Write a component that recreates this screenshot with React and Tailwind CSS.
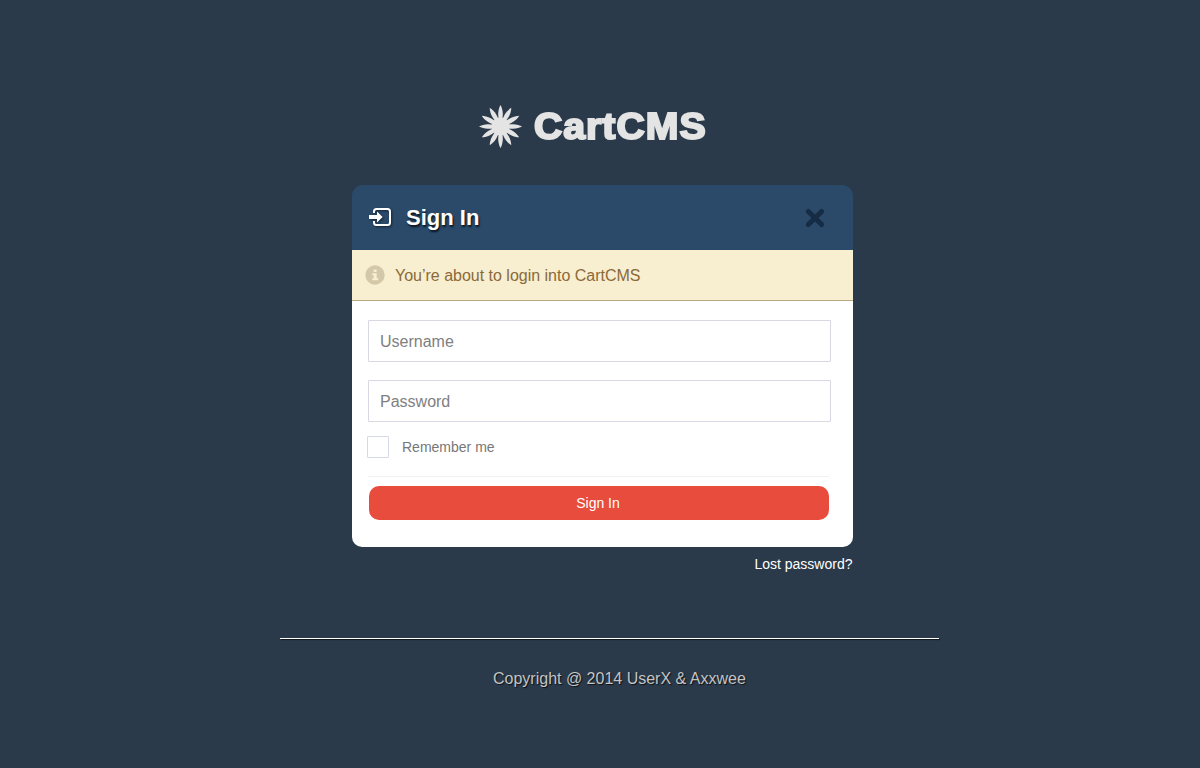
import React from "react";

const petals = [0, 30, 60, 90, 120, 150, 180, 210, 240, 270, 300, 330];

function FlowerLogo() {
  return (
    <svg className="h-[44px] w-[44px] shrink-0" viewBox="-21.5 -22.5 44 44" fill="#e4e4e4">
      <circle r="9" />
      {petals.map((a) => (
        <path key={a} transform={`rotate(${a})`} d="M0 -21.6C1.2 -19.5 2.3 -16 2.3 -12.5C2.3 -8 1.5 -4 0 0C-1.5 -4 -2.3 -8 -2.3 -12.5C-2.3 -16 -1.2 -19.5 0 -21.6Z" />
      ))}
    </svg>
  );
}

function SignInIcon() {
  return (
    <svg className="-mt-px h-[22px] w-[26px] shrink-0 drop-shadow-[1px_1px_1px_rgba(0,0,0,0.55)]" viewBox="0 0 26 22" fill="none">
      <path d="M5 7V5.5Q5 3 7.5 3H18.5Q21 3 21 5.5V16.5Q21 19 18.5 19H7.5Q5 19 5 16.5V15" stroke="#fff" strokeWidth="2" />
      <path d="M0 9H8V5.5L13.7 11L8 16.5V13H0Z" fill="#fff" />
    </svg>
  );
}

function CloseIcon() {
  return (
    <svg className="h-[20px] w-[20px]" viewBox="0 0 20 20" stroke="#162c44" strokeWidth="5">
      <path d="M3.4 3.4L16.6 16.6M16.6 3.4L3.4 16.6" strokeLinecap="round" />
    </svg>
  );
}

function InfoIcon() {
  return (
    <svg className="h-[20px] w-[20px] shrink-0" viewBox="0 0 20 20">
      <circle cx="10" cy="10" r="9.7" fill="#d3c9a8" />
      <path d="M8.6 4.6H11.6V7H8.6ZM7.2 8.2H11.7V13.2H13.2V15.2H7.2V13.2H8.7V10.2H7.2Z" fill="#f8eed0" />
    </svg>
  );
}

export default function App() {
  return (
    <div className="h-[768px] w-[1200px] overflow-hidden bg-[#2a3a4a] pt-[104px] font-['Liberation_Sans',Arial,sans-serif]">
      <header className="ml-[479px] flex h-[44px] items-center">
        <FlowerLogo />
        <h1 className="mt-[2px] ml-[11px] origin-left scale-x-[1.09] text-[36px] leading-[44px] font-bold tracking-[0.9px] text-[#e4e4e4] [-webkit-text-stroke:2px_#e4e4e4]">
          CartCMS
        </h1>
      </header>

      <main className="mt-[37px] ml-[352px] w-[501px]">
        <section className="h-[362px]">
          <div className="flex h-[65px] items-center rounded-t-[11px] bg-[#2b4a6a] pr-[28px] pl-[17px]">
            <SignInIcon />
            <h2 className="ml-[11px] flex-1 text-[22px] leading-[26px] font-bold text-white [text-shadow:1px_2px_2px_rgba(0,0,0,0.75)]">
              Sign In
            </h2>
            <button type="button" aria-label="Close" className="mt-px">
              <CloseIcon />
            </button>
          </div>
          <div className="flex h-[51px] items-center border-b border-[#b8ab84] bg-[#f8eed0] pl-[13px] text-[16px] text-[#8a6a38]">
            <InfoIcon />
            <span className="mt-[2px] ml-[10px] tracking-[-0.01px]">You’re about to login into CartCMS</span>
          </div>
          <form className="h-[246px] rounded-b-[10px] bg-white pt-[19px] pl-[16px]">
            <input
              placeholder="Username"
              className="block h-[42px] w-[463px] rounded-[1px] border border-[#d8d8e4] px-[11px] pt-[2px] text-[16px] outline-none placeholder:text-[#808080]"
            />
            <input
              type="password"
              placeholder="Password"
              className="mt-[18px] block h-[42px] w-[463px] rounded-[1px] border border-[#d8d8e4] px-[11px] pt-[2px] text-[16px] outline-none placeholder:text-[#808080]"
            />
            <label className="mt-[14px] -ml-px flex h-[22px] items-center text-[14px] text-[#777777]">
              <input type="checkbox" className="h-[22px] w-[22px] appearance-none rounded-[1px] border border-[#d5d9e3]" />
              <span className="ml-[13px]">Remember me</span>
            </label>
            <div className="mt-[18px] h-px w-[461px] bg-[#f1f1f1]" />
            <button type="button" className="mt-[9px] ml-px block h-[34px] w-[460px] rounded-[10px] bg-[#e84c3d] pr-[2px] text-center text-[14px] text-white">
              Sign In
            </button>
          </form>
        </section>
        <a href="#" className="mt-[7px] block pr-[0.5px] text-right text-[14px] leading-[20px] text-white">
          Lost password?
        </a>
      </main>

      <footer className="mt-[64px] ml-[280px] w-[659px]">
        <div className="h-px bg-white shadow-[1px_1px_1px_rgba(0,0,0,0.7)]" />
        <p className="mt-[28px] ml-[213px] text-[16px] leading-[24px] text-[#c4c4c4] [text-shadow:1px_1px_1px_rgba(0,0,0,0.7)]">
          Copyright @ 2014 UserX &amp; Axxwee
        </p>
      </footer>
    </div>
  );
}
